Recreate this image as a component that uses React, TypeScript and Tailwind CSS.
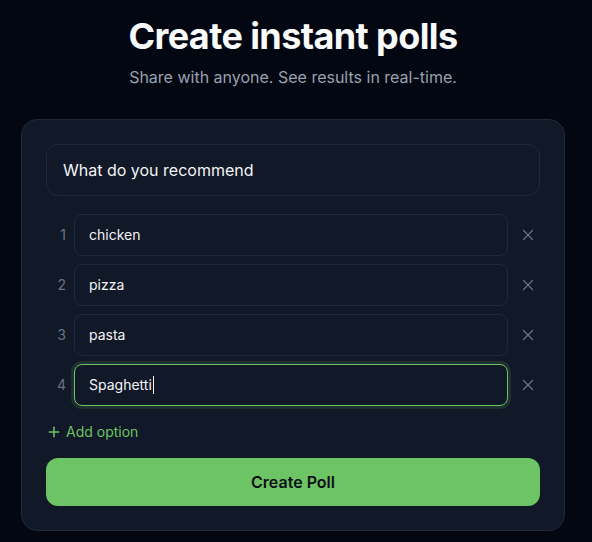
import { Plus, X } from "lucide-react";

const options = ["chicken", "pizza", "pasta", "Spaghetti"];

export default function App() {
  return (
    <main
      className="min-h-screen bg-[#030712] pt-[16px] text-white"
      style={{ fontFamily: "Inter, 'Noto Sans', sans-serif" }}
    >
      <div className="ml-[21px] w-[544px]">
        {/* Header */}
        <header className="text-center">
          <h1 className="text-[36px] leading-[40px] font-bold tracking-[-0.6px] text-gray-50">
            Create instant polls
          </h1>
          <p className="mt-[9px] text-base text-gray-400">
            Share with anyone. See results in real-time.
          </p>
        </header>

        {/* Poll form */}
        <section className="mt-[30px] rounded-2xl border border-gray-800 bg-[#111827] p-6">
          <div className="flex h-[52px] items-center rounded-xl border border-gray-800 px-4 text-base text-gray-100">
            What do you recommend
          </div>

          <div className="mt-[18px] flex flex-col gap-2">
            {options.map((option, i) => {
              const focused = i === options.length - 1;
              return (
                <div key={option} className="flex items-center gap-2">
                  <span className="w-5 text-right text-sm text-gray-500">
                    {i + 1}
                  </span>
                  <div
                    className={`flex h-[42px] flex-1 items-center rounded-lg px-[14px] text-sm text-gray-100 ${
                      focused
                        ? "border border-[#6cc464] ring-[3px] ring-[#6cc464]/15"
                        : "border border-gray-800"
                    }`}
                  >
                    {option}
                    {focused && (
                      <span className="ml-[1px] inline-block h-[18px] w-px bg-gray-100" />
                    )}
                  </div>
                  <button className="flex h-6 w-6 items-center justify-center text-gray-500">
                    <X size={18} strokeWidth={1.75} />
                  </button>
                </div>
              );
            })}
          </div>

          <button className="mt-[16px] flex items-center gap-1 text-sm text-[#6cc464]">
            <Plus size={16} strokeWidth={2.25} />
            Add option
          </button>

          <button className="mt-[16px] h-12 w-full rounded-xl bg-[#6cc464] text-base font-semibold text-[#0b0f17]">
            Create Poll
          </button>
        </section>
      </div>
    </main>
  );
}
